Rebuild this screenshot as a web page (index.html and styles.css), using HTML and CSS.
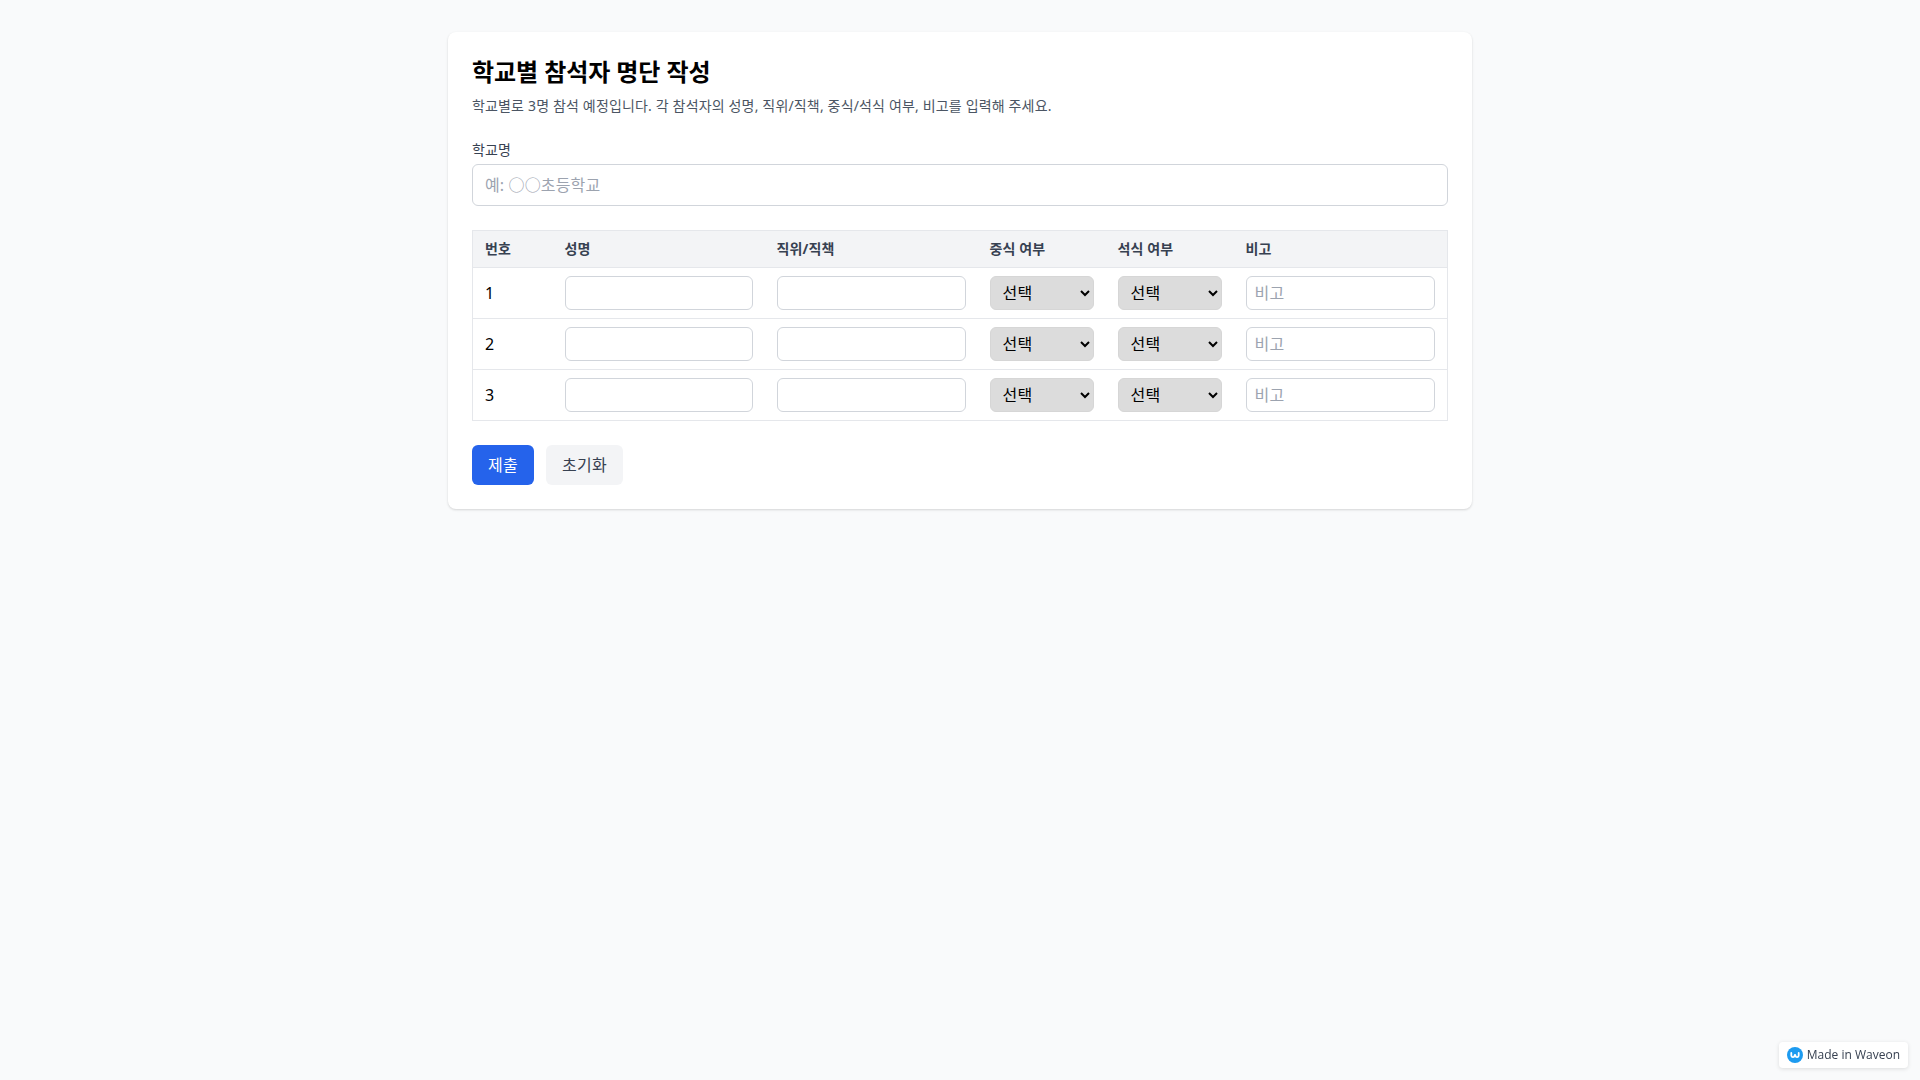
FILE: index.html
```html
<!DOCTYPE html>
<html lang="ko">
<head>
  <meta charset="UTF-8">
  <title>학교별 참석자 명단 작성</title>
  <link rel="stylesheet" href="styles.css">
</head>
<body>
  <div class="card">
    <h1>학교별 참석자 명단 작성</h1>
    <p class="desc">학교별로 3명 참석 예정입니다. 각 참석자의 성명, 직위/직책, 중식/석식 여부, 비고를 입력해 주세요.</p>

    <label class="label" for="school">학교명</label>
    <input id="school" class="input-field school" type="text" placeholder="예: ○○초등학교">

    <table class="roster">
      <colgroup>
        <col class="col-no"><col class="col-name"><col class="col-pos">
        <col class="col-meal"><col class="col-meal"><col class="col-note">
      </colgroup>
      <thead>
        <tr>
          <th>번호</th>
          <th>성명</th>
          <th>직위/직책</th>
          <th>중식 여부</th>
          <th>석식 여부</th>
          <th>비고</th>
        </tr>
      </thead>
      <tbody>
        <tr>
          <td>1</td>
          <td><input class="cell-input" type="text"></td>
          <td><input class="cell-input" type="text"></td>
          <td><select class="cell-select"><option>선택</option><option>참석</option><option>불참</option></select></td>
          <td><select class="cell-select"><option>선택</option><option>참석</option><option>불참</option></select></td>
          <td><input class="cell-input" type="text" placeholder="비고"></td>
        </tr>
        <tr>
          <td>2</td>
          <td><input class="cell-input" type="text"></td>
          <td><input class="cell-input" type="text"></td>
          <td><select class="cell-select"><option>선택</option><option>참석</option><option>불참</option></select></td>
          <td><select class="cell-select"><option>선택</option><option>참석</option><option>불참</option></select></td>
          <td><input class="cell-input" type="text" placeholder="비고"></td>
        </tr>
        <tr>
          <td>3</td>
          <td><input class="cell-input" type="text"></td>
          <td><input class="cell-input" type="text"></td>
          <td><select class="cell-select"><option>선택</option><option>참석</option><option>불참</option></select></td>
          <td><select class="cell-select"><option>선택</option><option>참석</option><option>불참</option></select></td>
          <td><input class="cell-input" type="text" placeholder="비고"></td>
        </tr>
      </tbody>
    </table>

    <div class="actions">
      <button class="button primary" type="button">제출</button>
      <button class="button" type="button">초기화</button>
    </div>
  </div>

  <a class="badge">
    <svg class="badge-logo" viewBox="0 0 16 16" aria-hidden="true">
      <circle cx="8" cy="8" r="8" fill="#1d9bf0"/>
      <path d="M4.3 6v2.4c0 2.2 2.9 2.2 3.2.4.1-.4.2-.9.5-.9s.4.5.5.9c.3 1.8 3.2 1.8 3.2-.4V6" fill="none" stroke="#fff" stroke-width="1.8" stroke-linecap="round"/>
    </svg>
    <span class="badge-text">Made in Waveon</span>
  </a>
</body>
</html>
```

FILE: styles.css
```css
* {
  box-sizing: border-box;
}
body {
  margin: 0;
  padding: 32px 0;
  min-height: 100vh;
  background-color: #f9fafb;
  color: #000;
  font-family: "Noto Sans", "Noto Sans CJK KR", sans-serif;
  font-size: 16px;
  line-height: 24px;
  letter-spacing: 0.28px;
}
.card {
  width: 1024px;
  margin: 0 auto;
  padding: 24px;
  background-color: #fff;
  border-radius: 8px;
  box-shadow: 0 1px 3px rgba(0, 0, 0, 0.1), 0 1px 2px rgba(0, 0, 0, 0.06);
}
h1 {
  margin: 0 0 8px;
  font-size: 24px;
  line-height: 32px;
  font-weight: 700;
  letter-spacing: -0.08px;
}
.desc {
  margin: 0 0 24px;
  font-size: 14px;
  line-height: 20px;
  letter-spacing: 0.16px;
  color: #4b5563;
}
.label {
  display: block;
  margin-bottom: 4px;
  font-size: 14px;
  line-height: 20px;
  letter-spacing: 0.12px;
  color: #374151;
}
.input-field {
  display: block;
  width: 100%;
  height: 42px;
  padding: 8px 12px;
  margin-bottom: 24px;
  border: 1px solid #d1d5db;
  border-radius: 6px;
  font: inherit;
  letter-spacing: 0.14px;
}
::placeholder {
  color: #9ca3af;
}
.roster {
  width: 100%;
  table-layout: fixed;
  border-collapse: collapse;
  border: 1px solid #e5e7eb;
}
.col-no { width: 80px; }
.col-name { width: 212px; }
.col-pos { width: 213px; }
.col-meal { width: 128px; }
.col-note { width: auto; }
.roster th {
  padding: 8px 12px;
  height: 37px;
  background-color: #f3f4f6;
  border-bottom: 1px solid #e5e7eb;
  text-align: left;
  font-size: 14px;
  line-height: 20px;
  font-weight: 700;
  letter-spacing: 0.12px;
  color: #374151;
}
.roster td {
  padding: 8px 12px;
  border-bottom: 1px solid #e5e7eb;
}
.cell-input,
.cell-select {
  display: block;
  width: 100%;
  height: 34px;
  border-radius: 6px;
  font: inherit;
  letter-spacing: inherit;
}
.cell-input {
  padding: 4px 8px;
  border: 1px solid #d1d5db;
}
.cell-select {
  padding: 4px 8px;
  border: 1px solid #d6d6d6;
  background-color: #dcdcdc;
  color: #000;
}
.actions {
  display: flex;
  gap: 12px;
  margin-top: 24px;
}
.button {
  height: 40px;
  padding: 8px 16px;
  border: none;
  border-radius: 6px;
  background-color: #f3f4f6;
  color: #374151;
  font: inherit;
  letter-spacing: inherit;
}
.primary {
  background-color: #2563eb;
  color: #fff;
}
.badge {
  position: fixed;
  right: 12px;
  bottom: 12px;
  display: flex;
  align-items: center;
  gap: 4px;
  height: 26px;
  padding: 0 8px;
  background-color: #fff;
  border-radius: 4px;
  box-shadow: 0 1px 4px rgba(0, 0, 0, 0.12);
  font-family: "Open Sans", sans-serif;
  font-size: 12px;
  line-height: 16px;
  letter-spacing: 0;
  color: #374151;
}
.badge-logo {
  width: 16px;
  height: 16px;
}
```
